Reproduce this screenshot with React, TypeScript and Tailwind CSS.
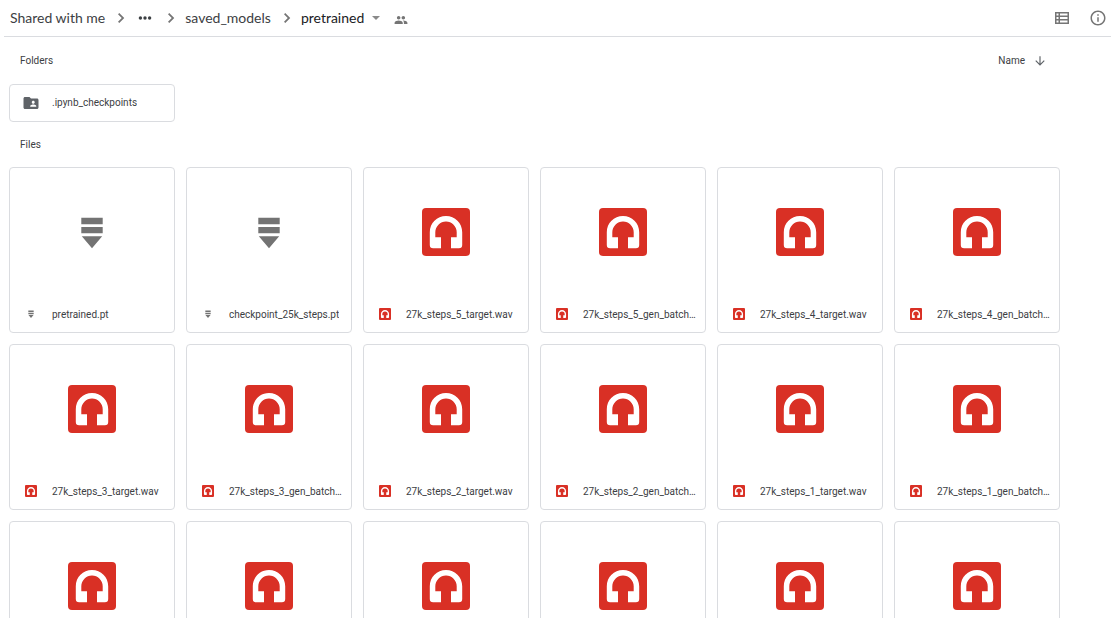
import React from "react";

type IconProps = { className?: string };

function ChevronRight() {
  return (
    <svg viewBox="0 0 24 24" className="mr-2 ml-2.5 size-3 shrink-0" fill="#757575" aria-hidden="true">
      <path d="M6 19.5 13.5 12 6 4.5 8.5 2l10 10-10 10z" />
    </svg>
  );
}

function AudioIcon({ className }: IconProps) {
  return (
    <svg viewBox="0 0 48 48" className={className} aria-hidden="true">
      <rect width="48" height="48" rx="4" fill="#d93025" />
      <path
        fill="#fff"
        d="M24 8C15 8 7.8 15.2 7.8 24.2V37a3.3 3.3 0 0 0 3.3 3.3H19v-11h-5.7v-5.1a10.7 10.7 0 0 1 21.4 0v5.1H29v11h7.9a3.3 3.3 0 0 0 3.3-3.3V24.2C40.2 15.2 33 8 24 8z"
      />
    </svg>
  );
}

function BinaryIcon({ className }: IconProps) {
  return (
    <svg viewBox="0 0 48 48" className={className} fill="#737373" aria-hidden="true">
      <path d="M13.3 9.8h21.4v6.4H13.3zM13.3 18.9h21.4v6.4H13.3zM13.8 28.2h20.4L24 40.2z" />
    </svg>
  );
}

type FileItem = { name: string; kind: "audio" | "binary" };

const files: FileItem[] = [
  { name: "pretrained.pt", kind: "binary" },
  { name: "checkpoint_25k_steps.pt", kind: "binary" },
  ...[5, 4, 3, 2, 1, 0].flatMap((n): FileItem[] => [
    { name: `27k_steps_${n}_target.wav`, kind: "audio" },
    { name: `27k_steps_${n}_gen_batch…`, kind: "audio" },
  ]),
  ...[5, 4].flatMap((n): FileItem[] => [
    { name: `26k_steps_${n}_target.wav`, kind: "audio" },
    { name: `26k_steps_${n}_gen_batch…`, kind: "audio" },
  ]),
];

function FileCard({ file }: { file: FileItem }) {
  const Icon = file.kind === "audio" ? AudioIcon : BinaryIcon;
  return (
    <button
      type="button"
      className="flex aspect-square min-w-0 flex-col rounded border border-[#dadce0] text-left"
    >
      <span className="flex w-full flex-1 items-center justify-center">
        <Icon className="size-12" />
      </span>
      <span className="flex h-9 w-full items-center gap-[15px] pr-1 pl-[15px]">
        <Icon className="size-3 shrink-0" />
        <span className="truncate pt-px">{file.name}</span>
      </span>
    </button>
  );
}

export default function App() {
  return (
    <div className="flex h-screen flex-col overflow-hidden bg-white font-['Roboto',sans-serif] text-[10px] leading-4 text-[#3c4043]">
      <header className="ml-1 flex h-[37px] shrink-0 items-center justify-between border-b border-[#dadce0] pr-1 pl-1.5">
        <nav aria-label="Breadcrumb" className="flex items-center font-['Lato',sans-serif] text-sm leading-5">
          <a href="#shared">Shared with me</a>
          <ChevronRight />
          <button type="button" aria-label="More folders" className="mx-0.5">
            <svg viewBox="0 0 16 16" className="size-4" fill="#3c4043" aria-hidden="true">
              <circle cx="3.4" cy="8" r="1.7" />
              <circle cx="8" cy="8" r="1.7" />
              <circle cx="12.6" cy="8" r="1.7" />
            </svg>
          </button>
          <ChevronRight />
          <a href="#saved">saved_models</a>
          <ChevronRight />
          <button type="button" className="flex items-center gap-2 text-[#202124]">
            pretrained
            <svg viewBox="0 0 8 4" className="h-1 w-2" fill="#8a8a8a" aria-hidden="true">
              <path d="M0 0h8L4 4z" />
            </svg>
          </button>
          <button type="button" aria-label="Shared people" className="mt-1 ml-3.5">
            <svg viewBox="0 0 24 24" className="size-3.5" fill="#757575" aria-hidden="true">
              <path d="M16 11c1.66 0 2.99-1.34 2.99-3S17.66 5 16 5c-1.66 0-3 1.34-3 3s1.34 3 3 3zm-8 0c1.66 0 2.99-1.34 2.99-3S9.66 5 8 5C6.34 5 5 6.34 5 8s1.34 3 3 3zm0 2c-2.33 0-7 1.17-7 3.5V19h14v-2.5c0-2.33-4.67-3.5-7-3.5zm8 0c-.29 0-.62.02-.97.05 1.16.84 1.97 1.97 1.97 3.45V19h6v-2.5c0-2.33-4.67-3.5-7-3.5z" />
            </svg>
          </button>
        </nav>
        <div className="flex items-center gap-5">
          <button type="button" aria-label="List view">
            <svg viewBox="0 0 14 12" className="h-3 w-3.5" aria-hidden="true">
              <path fill="#757575" fillRule="evenodd" d="M0 0h14v12H0zM1.5 1.5v2h2v-2zM5 1.5v2h7.5v-2zM1.5 5v2h2V5zM5 5v2h7.5V5zM1.5 8.5v2h2v-2zM5 8.5v2h7.5v-2z" />
            </svg>
          </button>
          <button type="button" aria-label="View details">
            <svg viewBox="0 0 24 24" className="size-[18px]" fill="#757575" aria-hidden="true">
              <path d="M11 17h2v-6h-2v6zm1-15C6.48 2 2 6.48 2 12s4.48 10 10 10 10-4.48 10-10S17.52 2 12 2zm0 18c-4.41 0-8-3.59-8-8s3.59-8 8-8 8 3.59 8 8-3.59 8-8 8zM11 9h2V7h-2v2z" />
            </svg>
          </button>
        </div>
      </header>

      <main className="min-h-0 flex-1 overflow-hidden pr-[51px] pl-[9px]">
        <section>
          <div className="flex h-[47px] items-center justify-between pr-[13px] pl-[11px]">
            <h2>Folders</h2>
            <button type="button" className="flex items-center gap-2">
              Name
              <svg viewBox="0 0 24 24" className="size-3.5" fill="#5f6368" aria-hidden="true">
                <path d="m20 12-1.41-1.41L13 16.17V4h-2v12.17l-5.58-5.59L4 12l8 8 8-8z" />
              </svg>
            </button>
          </div>
          <div className="grid grid-cols-6 gap-[11px]">
            <button
              type="button"
              className="flex h-[38px] items-center gap-3 rounded border border-[#dadce0] pr-2.5 pl-3 text-left"
            >
              <svg viewBox="0 0 24 24" className="size-[18px] shrink-0" fill="#5f6368" aria-hidden="true">
                <path d="M20 6h-8l-2-2H4c-1.1 0-1.99.9-1.99 2L2 18c0 1.1.9 2 2 2h16c1.1 0 2-.9 2-2V8c0-1.1-.9-2-2-2zm-5 3c1.1 0 2 .9 2 2s-.9 2-2 2-2-.9-2-2 .9-2 2-2zm4 8h-8v-1c0-1.33 2.67-2 4-2s4 .67 4 2v1z" />
              </svg>
              <span className="truncate">.ipynb_checkpoints</span>
            </button>
          </div>
        </section>
        <section>
          <h2 className="flex h-[45px] items-center pl-[11px]">Files</h2>
          <div className="grid grid-cols-6 gap-[11px]">
            {files.map((file) => (
              <FileCard key={file.name} file={file} />
            ))}
          </div>
        </section>
      </main>
    </div>
  );
}
